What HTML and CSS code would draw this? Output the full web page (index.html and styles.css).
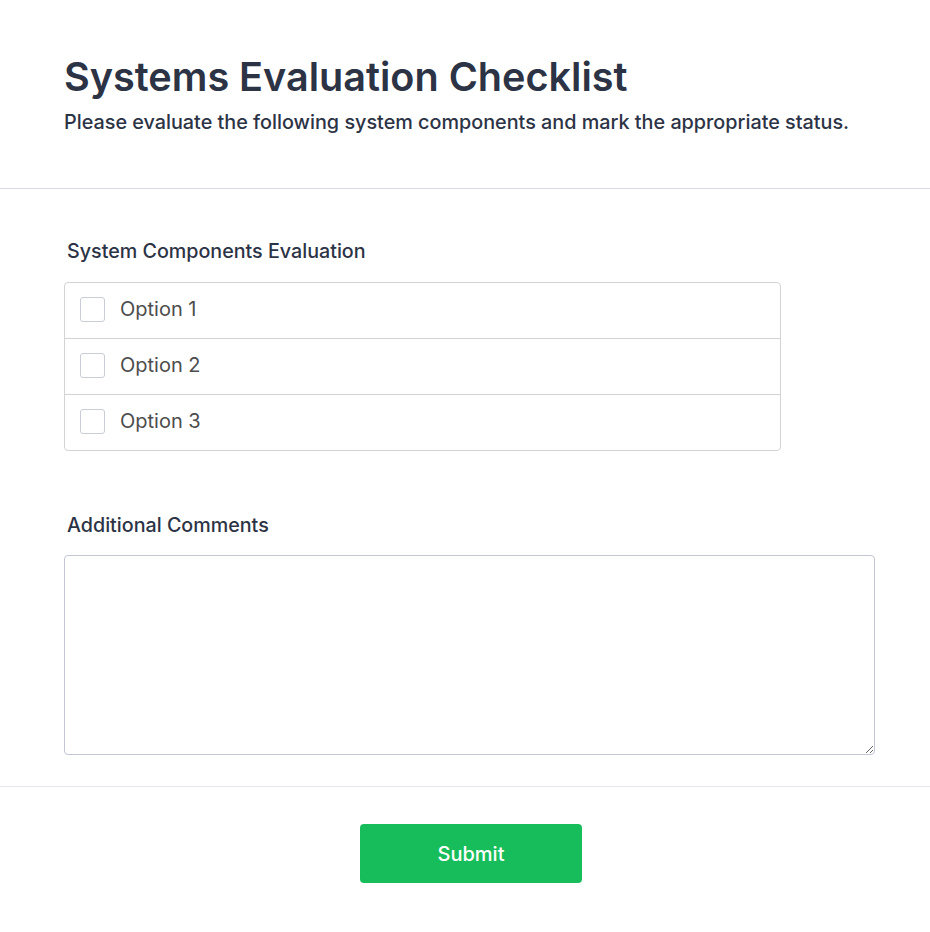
FILE: index.html
```html
<!DOCTYPE html>
<html>
<head>
<meta charset="utf-8">
<link rel="stylesheet" href="styles.css">
</head>
<body>
<div class="form">
  <header class="header">
    <h1 class="title">Systems Evaluation Checklist</h1>
    <p class="subtitle">Please evaluate the following system components and mark the appropriate status.</p>
  </header>
  <section class="body">
    <div class="field">
      <label class="label">System Components Evaluation</label>
      <div class="options">
        <label class="option"><span class="box"></span><span class="opt-text">Option 1</span></label>
        <label class="option"><span class="box"></span><span class="opt-text">Option 2</span></label>
        <label class="option"><span class="box"></span><span class="opt-text">Option 3</span></label>
      </div>
    </div>
    <div class="field field-comments">
      <label class="label">Additional Comments</label>
      <textarea class="comments"></textarea>
    </div>
  </section>
  <footer class="footer">
    <button class="submit">Submit</button>
  </footer>
</div>
</body>
</html>
```
FILE: styles.css
```css
* { box-sizing: border-box; }
html, body { margin: 0; padding: 0; background: #fff; }
body { font-family: Inter, "Noto Sans", sans-serif; color: #2c3345; }
.header {
  padding: 53px 64px 0;
  border-bottom: 1px solid #d8dae5;
  height: 189px;
}
.title {
  margin: 0;
  font-size: 39.6px;
  font-weight: 600;
  line-height: 48px;
  color: #2c3345;
}
.subtitle {
  margin: 9px 0 0;
  font-size: 19.8px;
  font-weight: 500;
  line-height: 24px;
  color: #2c3345;
}
.body {
  padding: 50px 55px 31px 64px;
  border-bottom: 1px solid #e6e8ef;
}
.label {
  display: block;
  font-size: 19.7px;
  font-weight: 500;
  line-height: 24px;
  padding-left: 3px;
  margin-bottom: 19px;
  color: #2c3345;
}
.options {
  width: 717px;
  border: 1px solid #d3d3d3;
  border-radius: 4px;
}
.option {
  display: flex;
  align-items: center;
  height: 56px;
  padding-left: 15px;
  padding-bottom: 3px;
  border-top: 1px solid #d3d3d3;
}
.option:first-child { border-top: none; height: 55px; }
.box {
  width: 25px;
  height: 25px;
  border: 1px solid #c9cdd6;
  border-radius: 3px;
  margin-right: 15px;
  background: #fff;
}
.opt-text {
  font-size: 20px;
  color: #4d4d4d;
}
.field-comments { margin-top: 62px; }
.field-comments .label { margin-bottom: 18px; }
.comments {
  display: block;
  width: 811px;
  height: 200px;
  border: 1px solid #c3c6d4;
  border-radius: 4px;
  resize: vertical;
  font-family: inherit;
  font-size: 16px;
}
.footer {
  display: flex;
  justify-content: center;
  padding: 37px 0 50px 12px;
}
.submit {
  width: 222px;
  height: 59px;
  background: #18bd5b;
  border: none;
  border-radius: 4px;
  color: #fff;
  font-family: Inter, sans-serif;
  font-size: 20px;
  font-weight: 500;
}
```
